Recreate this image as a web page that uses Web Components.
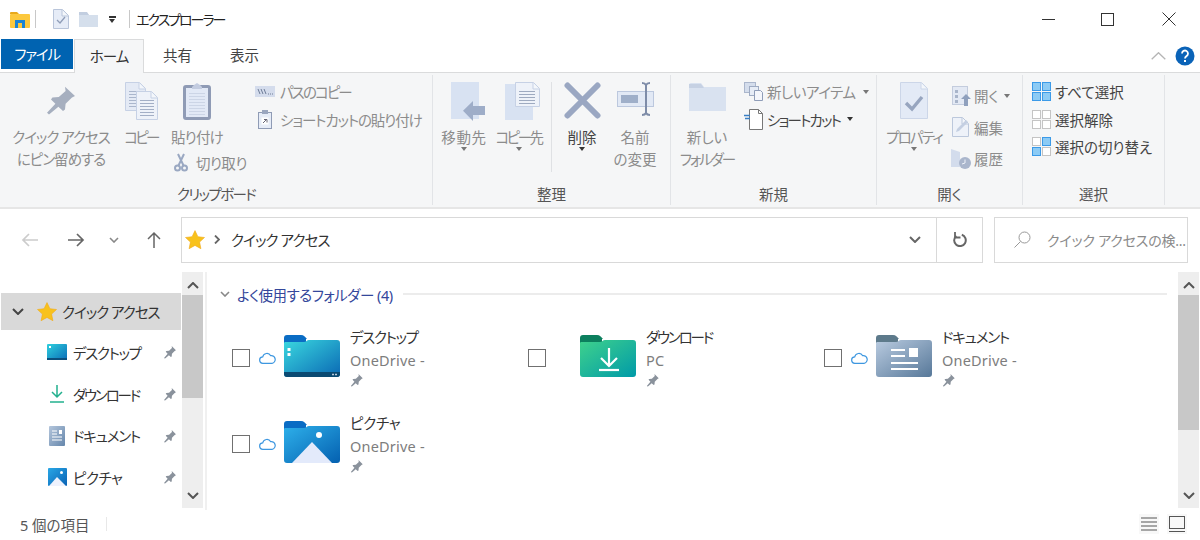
<!DOCTYPE html>
<html lang="ja">
<head>
<meta charset="utf-8">
<title>エクスプローラー</title>
<style>
  html, body { margin: 0; height: 100%; background: #fff; overflow: hidden; }
  body {
    font-family: "Noto Sans", "Noto Sans CJK JP", sans-serif;
    font-size: 14.5px;
    font-feature-settings: "palt";
    color: #333;
  }
  #app { display: flex; flex-direction: column; width: 1200px; height: 540px; }
</style>
</head>
<body>
<div id="app">
  <title-bar></title-bar>
  <ribbon-tabs></ribbon-tabs>
  <ribbon-bar>
    <ribbon-group label="クリップボード" style="width:433px;--pad:10px;--label-ls:-1.6px">
      <ribbon-btn icon="pinBig" style="width:102px;letter-spacing:-1px;--iy:3px">クイック アクセス<br>にピン留めする</ribbon-btn>
      <ribbon-btn icon="copy" style="width:38px;margin-left:10px;letter-spacing:-2.700px">コピー</ribbon-btn>
      <ribbon-stack style="width:87px;margin-left:8px">
        <ribbon-btn icon="paste" style="width:58px;letter-spacing:-.800px">貼り付け</ribbon-btn>
        <ribbon-item icon="cut" style="margin-left:3px;height:28px;letter-spacing:-.600px">切り取り</ribbon-item>
      </ribbon-stack>
      <ribbon-stack>
        <ribbon-item icon="pathCopy" style="letter-spacing:-1.900px">パスのコピー</ribbon-item>
        <ribbon-item icon="linkPaste" style="letter-spacing:-1.100px">ショートカットの貼り付け</ribbon-item>
      </ribbon-stack>
    </ribbon-group>
    <ribbon-group label="整理" style="width:238px;--pad:8px">
      <ribbon-btn icon="moveTo" arrow style="width:46px;letter-spacing:.600px;--ix:8px">移動先</ribbon-btn>
      <ribbon-btn icon="copyTo" arrow style="width:47px;margin-left:8px;letter-spacing:-2.500px;--ix:8px">コピー先</ribbon-btn>
      <ribbon-sep></ribbon-sep>
      <ribbon-btn icon="del" arrow active style="width:60px">削除</ribbon-btn>
      <ribbon-btn icon="rename" style="width:46px">名前<br>の変更</ribbon-btn>
    </ribbon-group>
    <ribbon-group label="新規" style="width:206px">
      <ribbon-btn icon="newFolder" style="width:72px">新しい<br><span style="letter-spacing:-2px">フォルダー</span></ribbon-btn>
      <ribbon-stack style="--gap:4px">
        <ribbon-item icon="newItem" arrow style="letter-spacing:-.500px">新しいアイテム</ribbon-item>
        <ribbon-item icon="shortcut" arrow active style="letter-spacing:-1.800px">ショートカット</ribbon-item>
      </ribbon-stack>
    </ribbon-group>
    <ribbon-group label="開く" style="width:146px">
      <ribbon-btn icon="props" arrow style="width:74px;letter-spacing:-1.800px">プロパティ</ribbon-btn>
      <ribbon-stack style="padding-top:2px;--row:31.500px;--gap:3px">
        <ribbon-item icon="open" arrow>開く</ribbon-item>
        <ribbon-item icon="edit">編集</ribbon-item>
        <ribbon-item icon="history">履歴</ribbon-item>
      </ribbon-stack>
    </ribbon-group>
    <ribbon-group label="選択" style="width:142px;--pad:8px">
      <ribbon-stack style="--gap:4px">
        <ribbon-item icon="selAll" active>すべて選択</ribbon-item>
        <ribbon-item icon="selNone" active>選択解除</ribbon-item>
        <ribbon-item icon="selInv" active>選択の切り替え</ribbon-item>
      </ribbon-stack>
    </ribbon-group>
  </ribbon-bar>
  <nav-bar></nav-bar>
  <main-pane>
    <nav-tree slot="tree">
      <tree-item icon="star" root selected style="letter-spacing:-1px">クイック アクセス</tree-item>
      <tree-item icon="treeDesktop" style="letter-spacing:-1.300px">デスクトップ</tree-item>
      <tree-item icon="treeDownload" style="letter-spacing:-2.200px">ダウンロード</tree-item>
      <tree-item icon="treeDocs" style="letter-spacing:-1.200px">ドキュメント</tree-item>
      <tree-item icon="treePics" style="letter-spacing:-.500px">ピクチャ</tree-item>
    </nav-tree>
    <scroll-bar slot="tree-scroll" top="23" size="103"></scroll-bar>
    <folder-group slot="content" label="よく使用するフォルダー (4)">
      <folder-tile icon="folderDesktop" cloud sub="OneDrive -" style="--name-ls:-1.300px">デスクトップ</folder-tile>
      <folder-tile icon="folderDownload" sub="PC" style="--name-ls:-2.200px">ダウンロード</folder-tile>
      <folder-tile icon="folderDocs" cloud sub="OneDrive -" style="--name-ls:-1.200px">ドキュメント</folder-tile>
      <folder-tile icon="folderPics" cloud sub="OneDrive -" style="--name-ls:-.300px">ピクチャ</folder-tile>
    </folder-group>
    <scroll-bar slot="content-scroll" top="23" size="135"></scroll-bar>
  </main-pane>
  <status-bar>5 個の項目</status-bar>
</div>

<script>
// every icon lives here, x-icon stamps it into its own shadow root
const page = (x, y, w, h, fill = '#e4eaf5', line = '#c6d1e5') =>
  `<path d="M${x + .5} ${y + .5}h${w - 7}l6 6v${h - 7}h-${w - 1}z" fill="${fill}" stroke="${line}"/><path d="M${x + w - 7} ${y + 1}v6h6" fill="#f4f7fb" stroke="${line}"/>`
const lines = (x, y, w, n, gap = 3, c = '#aab6cc') =>
  Array.from({ length: n }, (_, i) => `<path d="M${x} ${y + i * gap + .5}h${w}" stroke="${c}"/>`).join('')
const grid = (a, b, c, d) => {
  const cell = (x, y, on) => `<rect x="${x + .5}" y="${y + .5}" width="8" height="8" fill="${on ? '#8ccbf5' : '#fff'}" stroke="${on ? '#3b9ae8' : '#c4c4c4'}"/>`
  return cell(0, 0, a) + cell(10, 0, b) + cell(0, 10, c) + cell(10, 10, d)
}
const PIN = 'M10 1l5 5-1.500.7-3.200 3.400-.3 3.200-1 .7-2.300-2.300L2 16l-1-1 4.200-4.900L3 7.800l.7-1 3.200-.3 3.400-3.200z'
const STAR = 'M10 .6l2.900 6.100 6.600.8-4.900 4.600 1.300 6.600L10 15.400l-5.900 3.300 1.300-6.600L.5 7.500l6.600-.8z'
const folderShape = (tab, id, extra) => `
  <path d="M0 4a3 3 0 0 1 3-3h14c3 0 4 2 6 4h-23z M0 5h22v5H0z" fill="${tab}"/>
  <path d="M0 9c0-1 1-1 2-1h18c2 0 3-2 5-2h28a3 3 0 0 1 3 3v31a3 3 0 0 1-3 3H3a3 3 0 0 1-3-3z" fill="url(#${id})"/>${extra}`
const grad = (id, a, b) => `<defs><linearGradient id="${id}" x1="0" y1="0" x2="1" y2="1"><stop offset="0" stop-color="${a}"/><stop offset="1" stop-color="${b}"/></linearGradient></defs>`

const ICONS = {
  pinSmall: [16, 16, `<path d="${PIN}" fill="#8a929c"/>`],
  pinBig: [33, 30, `<g transform="scale(2 1.85)"><path d="${PIN}" fill="#a6afbf"/></g>`],
  copy: [33, 38, page(0, 0, 21, 29) + lines(4, 9, 12, 6, 3) + page(11, 9, 22, 29, '#eef2f9') + lines(15, 18, 14, 6, 3, '#a3afc6')],
  paste: [28, 38, `<rect x="1.500" y="4.500" width="25" height="32" rx="1.500" fill="#e2e9f6" stroke="#8f9bb5" stroke-width="3"/><path d="M9 5l2-2 3-2 3 2 2 2v2H9z" fill="#c3cce0"/>` + lines(6, 11, 16, 8, 3, '#ccd5e6')],
  cut: [14, 19, `<g fill="none" stroke="#9aa8c2" stroke-width="2"><circle cx="3.500" cy="15" r="2.500"/><circle cx="10.500" cy="15" r="2.500"/><path d="M4.500 12.500L10 1M9.500 12.500L4 1"/></g>`],
  pathCopy: [20, 11, `<rect width="20" height="11" fill="#d4dcec"/><path d="M3 3l2 5M6 3l2 5M9 3l2 5" stroke="#6f7d98"/><path d="M13 8h5" stroke="#6f7d98" stroke-dasharray="1 1"/>`],
  linkPaste: [14, 19, `<rect x=".5" y="2.500" width="13" height="16" fill="#e6ecf7" stroke="#8f9bb5"/><rect x="4" y="0" width="6" height="4" fill="#9aa6bf"/><rect x="3.500" y="7.500" width="7" height="7" fill="#fff"/><path d="M5 13l3-3M6 9.500h3v3" stroke="#667" fill="none"/>`],
  moveTo: [34, 39, `<path d="M0 0h28v37H0z" fill="#d8e2f2"/><path d="M34 24v9H22v6L12 28.700 22 19v5z" fill="#9eadc8"/>`],
  copyTo: [35, 38, `<path d="M0 2h28v36H0z" fill="#d8e2f2"/>` + page(10, 0, 25, 25, '#eef2f9') + lines(14, 9, 16, 5, 3, '#9eaac0')],
  del: [37, 37, `<path d="M3.500 3.500l30 30M33.500 3.500l-30 30" stroke="#9aa7c2" stroke-width="6" stroke-linecap="round"/>`],
  rename: [37, 34, `<rect x=".5" y="9.500" width="36" height="15" fill="#e2e9f5" stroke="#bcc8de"/><rect x="4" y="13" width="17" height="8" fill="#9fafc9"/><path d="M25 1c1 0 3 0 4 2 1-2 3-2 4-2M29 3v28M25 33c1 0 3 0 4-2 1 2 3 2 4 2" fill="none" stroke="#7e8ca8" stroke-width="2"/>`],
  newFolder: [37, 29, `<path d="M0 3a2 2 0 0 1 2-2h10l3 4h22v24H0z" fill="#d9e2f0"/><path d="M0 2h12l3 4H0z" fill="#c6d1e3"/>`],
  newItem: [19, 19, `<rect x=".5" y=".5" width="11" height="10" fill="#d4ddec" stroke="#aab6cc"/><rect x="5.500" y="4.500" width="9" height="9" fill="#e6ecf6" stroke="#9eabc3"/><path d="M10.500 8.500h6l2 2v8h-8z" fill="#f4f6fb" stroke="#8f9db8"/>`],
  shortcut: [19, 21, `<path d="M5.500 .5h9l4 4v16h-13z" fill="#fff" stroke="#777"/><path d="M14.500 .5v4h4" fill="none" stroke="#777"/><path d="M0 6.500h6M1 9.500h5" stroke="#3a7fc4" stroke-width="1.400"/>`],
  props: [28, 37, page(0, 0, 28, 37, '#e3eaf6', '#ccd6e8') + `<path d="M6 21l6 6 10-12" fill="none" stroke="#97a5bf" stroke-width="3.400"/>`],
  open: [19, 20, `<rect x=".5" y=".5" width="15" height="18" fill="#e3e9f4" stroke="#c3ccdd"/><path d="M3 4h3v3H3zM3 9h3v3H3zM3 14h3v3H3z" fill="#a9b5ca"/><path d="M14 8l5 5h-3v7h-4v-7H9z" fill="#8fa0bd"/>`],
  edit: [19, 20, page(0, 0, 17, 20, '#eef2f9', '#bcc8dc') + `<path d="M4 15l1-3 9-9 2 2-9 9z" fill="#c4cfe2"/>`],
  history: [20, 20, `<path d="M0 0l9 3v15l-9 0z" fill="#d3dcec"/><circle cx="14" cy="14" r="6" fill="#aab6cc"/><path d="M14 10.500V14l-3 1" stroke="#eef2f9" fill="none"/>`],
  selAll: [19, 19, grid(1, 1, 1, 1)],
  selNone: [19, 19, grid(0, 0, 0, 0)],
  selInv: [19, 19, grid(0, 1, 1, 0)],
  star: [20, 19, `<path d="${STAR}" fill="#f8c21c" stroke="#f2a91a" stroke-width=".6"/>`],
  cloud: [17, 12, `<path d="M4 11.300a3.200 3.200 0 0 1-.3-6.400 4.300 4.300 0 0 1 8-1.200 3.800 3.800 0 0 1 1.300 7.600z" fill="none" stroke="#3d97e0" stroke-width="1.200"/>`],
  treeDesktop: [20, 16, grad('a', '#2fd0de', '#0a6db8') + `<rect width="20" height="16" rx="1" fill="url(#a)"/><rect y="14" width="20" height="2" fill="#0b4f7d"/><rect x="2" y="2" width="2" height="2" fill="#fff"/>`],
  treeDownload: [14, 18, `<path d="M7 0v12M2 7l5 5 5-5" fill="none" stroke="#22b08e" stroke-width="1.500"/><path d="M0 17h14" stroke="#22b08e" stroke-width="1.500"/>`],
  treeDocs: [16, 20, grad('a', '#b4c6dc', '#6586ab') + `<rect width="16" height="20" rx="1" fill="url(#a)"/><path d="M3 5h5M3 8h5M3 11h10M3 14h10" stroke="#fff"/><rect x="10" y="4" width="3" height="4" fill="#fff"/>`],
  treePics: [19, 18, grad('a', '#29a7e6', '#0a62b4') + `<rect width="19" height="18" rx="1" fill="url(#a)"/><path d="M1 18l8-9 9 9z" fill="#eef2fd"/><circle cx="13.500" cy="4.500" r="1.500" fill="#fff"/>`],
  folderDesktop: [56, 44, grad('a', '#3ad8df', '#0a68b4') + folderShape('#0a6cc4', 'a', `<path d="M0 38h56v2a3 3 0 0 1-3 3H3a3 3 0 0 1-3-3z" fill="#0b4a72"/><rect x="3.500" y="14" width="3" height="3" fill="#fff"/><rect x="3.500" y="19" width="3" height="3" fill="#fff"/><path d="M48 40.500h2M51 40.500h2" stroke="#bcd" stroke-width="1.500"/>`)],
  folderDownload: [56, 44, grad('a', '#3fd28c', '#009aa8') + folderShape('#0c7f5e', 'a', `<path d="M29 14v18M21 24l8 8 8-8" fill="none" stroke="#fff" stroke-width="2.200"/><path d="M19 36h20" stroke="#fff" stroke-width="2.200"/>`)],
  folderDocs: [56, 44, grad('a', '#b9cbe0', '#577899') + folderShape('#5d7a8b', 'a', `<path d="M15 16h14M15 22h14M15 29h27M15 35h27" stroke="#fff" stroke-width="2"/><rect x="33" y="14" width="9" height="9" fill="#fff"/>`)],
  folderPics: [56, 44, grad('a', '#2eb0ea', '#0460b0') + folderShape('#0a6cc4', 'a', `<circle cx="35" cy="15" r="3" fill="#fff"/><path d="M8 43l20-21 20 21z" fill="#e3eafb"/>`)],
  iconApp: [20, 17, `<path d="M0 2a1 1 0 0 1 1-1h6l2 2H0z" fill="#e8a91c"/><rect y="3" width="20" height="14" rx="1" fill="#fcc83d"/><rect x="5" y="9" width="10" height="8" fill="#1a84d4"/><rect x="8" y="12" width="4" height="5" fill="#fcc83d"/>`],
  qaCheck: [16, 20, page(0, 0, 16, 20, '#e6ecf7', '#b9c5da') + `<path d="M4 11l3 3 5-6" fill="none" stroke="#8f9db8" stroke-width="1.300"/>`],
  qaFolder: [19, 15, `<path d="M0 1h8l2 2h9v12H0z" fill="#d5dfec"/><path d="M0 0h8l2 3H0z" fill="#c2cee0"/>`],
  back: [17, 14, `<path d="M17 7H2M8 1L2 7l6 6" fill="none" stroke="currentColor" stroke-width="1.700"/>`],
  forward: [17, 14, `<path d="M0 7h15M9 1l6 6-6 6" fill="none" stroke="currentColor" stroke-width="1.700"/>`],
  up: [14, 17, `<path d="M7 17V2M1 8l6-6 6 6" fill="none" stroke="currentColor" stroke-width="1.500"/>`],
  down: [10, 6, `<path d="M1 1l4 4 4-4" fill="none" stroke="currentColor" stroke-width="1.600"/>`],
  downBold: [12, 7, `<path d="M1 1l5 5 5-5" fill="none" stroke="currentColor" stroke-width="2"/>`],
  upBold: [12, 7, `<path d="M1 6l5-5 5 5" fill="none" stroke="currentColor" stroke-width="2"/>`],
  right: [6, 9, `<path d="M1 .5l4 4-4 4" fill="none" stroke="currentColor" stroke-width="1.800"/>`],
  refresh: [14, 15, `<path d="M8.800 2.800a5.800 5.800 0 1 1-5.500 1" fill="none" stroke="currentColor" stroke-width="2"/><path d="M2 0v5.500h5.500" fill="none" stroke="currentColor" stroke-width="1.800"/>`],
  search: [17, 17, `<circle cx="10.500" cy="6.500" r="5.500" fill="none" stroke="currentColor"/><path d="M6.500 10.500L.5 16.500" stroke="currentColor"/>`],
  minimize: [13, 1, `<path d="M0 .5h13" stroke="currentColor"/>`],
  maximize: [13, 13, `<rect x=".5" y=".5" width="12" height="12" fill="none" stroke="currentColor"/>`],
  close: [14, 14, `<path d="M.5.500l13 13M13.500.500l-13 13" stroke="currentColor"/>`],
  chevUp: [15, 8, `<path d="M.7 7.300L7.500 .7l6.800 6.600" fill="none" stroke="#b5b5b5" stroke-width="1.300"/>`],
  help: [20, 20, `<circle cx="10" cy="10" r="9.500" fill="#0a63b8"/><path d="M7 7.500a3 3 0 1 1 4.500 2.600c-1 .6-1.500 1-1.500 2.400" fill="none" stroke="#fff" stroke-width="1.800"/><rect x="9" y="14" width="2" height="2" fill="#fff"/>`],
  detail: [16, 14, `<path d="M0 1h16M0 5h16M0 9h16M0 13h16" stroke="#555" stroke-width="1.200"/>`],
  tiles: [16, 16, `<rect x=".5" y=".5" width="15" height="12" fill="none" stroke="#555"/><path d="M0 15.500h16" stroke="#555"/>`]
}

customElements.define('x-icon', class extends HTMLElement {
  constructor () {
    super()
    this.attachShadow({ mode: 'open' })
  }

  connectedCallback () {
    const [w, h, body] = ICONS[this.getAttribute('name')]
    this.shadowRoot.innerHTML = `
      <style>:host{display:inline-flex;flex:none;line-height:0}</style>
      <svg width="${w}" height="${h}" viewBox="0 0 ${w} ${h}" xmlns="http://www.w3.org/2000/svg">${body}</svg>`
  }
})

// small helper so the classes below stay short
const define = (tag, markup) => customElements.define(tag, class extends HTMLElement {
  constructor () {
    super()
    this.attachShadow({ mode: 'open' })
    this.shadowRoot.innerHTML = typeof markup === 'function' ? markup(this) : markup
  }
})

define('title-bar', `
<style>
  :host{display:flex;align-items:center;height:38px;flex:none;position:relative;font-size:14px;color:#222}
  .sep{width:1px;height:18px;background:#c8c8c8}
  .win{margin-left:auto;display:flex;color:#333;padding-right:24px;align-items:center}
  .drop{width:0;height:0;border:3.500px solid transparent;border-top:4px solid #333;border-bottom:0;margin-top:3px;position:relative}
  .drop::before{content:"";position:absolute;left:-3.500px;top:-6.500px;width:7px;height:1.500px;background:#333}
</style>
<x-icon name="iconApp" style="margin-left:10px"></x-icon>
<div class="sep" style="margin-left:5px"></div>
<x-icon name="qaCheck" style="margin-left:17px"></x-icon>
<x-icon name="qaFolder" style="margin-left:10px"></x-icon>
<div class="drop" style="margin-left:11px"></div>
<div class="sep" style="margin-left:14px"></div>
<span style="margin-left:6px;letter-spacing:-2px">エクスプローラー</span>
<div class="win">
  <x-icon name="minimize"></x-icon>
  <x-icon name="maximize" style="margin-left:46px"></x-icon>
  <x-icon name="close" style="margin-left:48px"></x-icon>
</div>`)

define('ribbon-tabs', `
<style>
  :host{display:flex;height:35px;flex:none;box-sizing:border-box;border-bottom:1px solid #dadbdc;padding-left:1px;align-items:flex-start;padding-top:1px}
  div{height:32px;line-height:33px;text-align:center;box-sizing:border-box}
  .file{width:72px;height:30px;line-height:31px;background:#0063b1;color:#fff;letter-spacing:-1.200px}
  .home{width:70px;height:34px;margin-left:1px;background:#f5f6f7;border:1px solid #dadbdc;border-bottom:0;color:#333;letter-spacing:-1px}
  .tab{width:67px;color:#444}
  .help{margin-left:auto;display:flex;gap:9px;align-items:center;padding:7px 5px 0 0;height:auto}
</style>
<div class="file">ファイル</div>
<div class="home">ホーム</div>
<div class="tab">共有</div>
<div class="tab">表示</div>
<div class="help"><x-icon name="chevUp"></x-icon><x-icon name="help"></x-icon></div>`)

define('ribbon-bar', `
<style>
  :host{display:flex;height:136px;flex:none;box-sizing:border-box;background:#f5f6f7;border-bottom:2px solid #e6e6e6;padding:2px 0 2px}
</style>
<slot></slot>`)

define('ribbon-group', el => `
<style>
  :host{display:flex;flex-direction:column;flex:none;box-sizing:border-box;border-right:1px solid #e2e4e7}
  .body{display:flex;flex:1;padding:3px 0 0 var(--pad,0);min-height:0}
  .label{height:22px;line-height:22px;text-align:center;color:#555;letter-spacing:var(--label-ls,0)}
</style>
<div class="body"><slot></slot></div>
<div class="label">${el.getAttribute('label')}</div>`)

define('ribbon-btn', el => `
<style>
  :host{display:flex;flex-direction:column;align-items:center;flex:none;padding-top:4px;color:${el.hasAttribute('active') ? '#444' : '#8c8c8c'};white-space:nowrap;text-align:center;line-height:22px}
  .icon{height:44px;display:flex;align-items:flex-start;box-sizing:border-box;padding:var(--iy,0) 0 0 var(--ix,0)}
  .arrow{width:0;height:0;border:3.500px solid transparent;border-top:4px solid ${el.hasAttribute('active') ? '#333' : '#777'};border-bottom:0;margin-top:-1px}
</style>
<div class="icon"><x-icon name="${el.getAttribute('icon')}"></x-icon></div>
<div><slot></slot></div>
${el.hasAttribute('arrow') ? '<div class="arrow"></div>' : ''}`)

define('ribbon-stack', `
<style>:host{display:flex;flex-direction:column;flex:none}</style>
<slot></slot>`)

define('ribbon-item', el => `
<style>
  :host{display:flex;align-items:center;height:var(--row,27.500px);gap:var(--gap,5px);white-space:nowrap;color:${el.hasAttribute('active') ? '#444' : '#8c8c8c'}}
  .box{width:20px;display:flex;justify-content:center}
  .arrow{width:0;height:0;border:3.500px solid transparent;border-top:4px solid ${el.hasAttribute('active') ? '#333' : '#777'};border-bottom:0;margin-left:3px}
</style>
<div class="box"><x-icon name="${el.getAttribute('icon')}"></x-icon></div>
<slot></slot>
${el.hasAttribute('arrow') ? '<div class="arrow"></div>' : ''}`)

define('ribbon-sep', `
<style>:host{display:block;flex:none;width:1px;height:90px;margin:4px 0 0 9px;background:#dfe1e4}</style>`)

define('nav-bar', `
<style>
  :host{display:flex;align-items:center;height:63px;flex:none;box-sizing:border-box;padding:0 12px 2px 0}
  .btn{display:flex;flex:none;color:#666}
  .addr,.search{display:flex;align-items:center;height:46px;box-sizing:border-box;border:1px solid #d9d9d9;color:#333}
  .addr{width:802px;margin-left:20px}
  .search{width:194px;margin-left:11px;color:#8a8a8a;font-size:14px}
  .path{flex:1;margin-left:11px;letter-spacing:-.900px}
  .end{display:flex;align-items:center;justify-content:center;width:45px;height:100%;border-left:1px solid #d9d9d9;color:#666}
</style>
<x-icon class="btn" name="back" style="margin-left:21px;color:#ccc"></x-icon>
<x-icon class="btn" name="forward" style="margin-left:30px"></x-icon>
<x-icon class="btn" name="down" style="margin-left:24px;color:#888"></x-icon>
<x-icon class="btn" name="up" style="margin-left:28px"></x-icon>
<div class="addr">
  <x-icon name="star" style="margin-left:3px"></x-icon>
  <x-icon name="right" style="margin-left:9px;color:#666"></x-icon>
  <span class="path">クイック アクセス</span>
  <x-icon name="downBold" style="color:#666;margin-right:15px"></x-icon>
  <div class="end"><x-icon name="refresh"></x-icon></div>
</div>
<div class="search">
  <x-icon name="search" style="margin-left:19px;color:#999"></x-icon>
  <span style="margin-left:16px;white-space:nowrap;letter-spacing:-.200px">クイック アクセスの検...</span>
</div>`)

define('main-pane', `
<style>
  :host{display:flex;flex:1;min-height:0}
  .tree{width:181px;flex:none;padding-top:21px;box-sizing:border-box}
  .div{width:2px;flex:none;margin-left:2px;background:#f0f0f0}
  .content{flex:1;min-width:0}
  .right{padding-right:1px}
  ::slotted(scroll-bar){margin-left:1px}
</style>
<div class="tree"><slot name="tree"></slot></div>
<slot name="tree-scroll"></slot>
<div class="div"></div>
<div class="content"><slot name="content"></slot></div>
<div class="right"><slot name="content-scroll"></slot></div>`)

define('nav-tree', `
<style>:host{display:block}</style>
<slot></slot>`)

define('tree-item', el => {
  const root = el.hasAttribute('root')
  return `
<style>
  :host{display:flex;align-items:center;box-sizing:border-box;margin-left:1px;height:${root ? 37 : 41.7}px;color:#333;white-space:nowrap;${el.hasAttribute('selected') ? 'background:#d9d9d9;margin-bottom:1.500px;' : ''}}
  .ic{display:flex;justify-content:center;align-items:center;flex:none;width:24px;margin-left:${root ? 3 : 44}px;margin-right:${root ? 1 : 2}px}
  .t{flex:1;margin-left:2px}
  .ch{display:flex;flex:none;margin-left:11px;width:20px;color:#444}
</style>
${root ? '<x-icon class="ch" name="downBold"></x-icon>' : ''}
<div class="ic"><x-icon name="${el.getAttribute('icon')}"></x-icon></div>
<div class="t"><slot></slot></div>
${root ? '' : '<x-icon name="pinSmall" style="margin-right:3px;transform:scale(.85)"></x-icon>'}`
})

define('scroll-bar', el => `
<style>
  :host{display:flex;flex-direction:column;flex:none;width:21px;height:236px;background:#eee;position:relative;color:#555;align-items:center}
  .a{position:absolute;display:flex}
  .thumb{position:absolute;left:0;right:0;top:${el.getAttribute('top')}px;height:${el.getAttribute('size')}px;background:#c8c8c8}
</style>
<x-icon class="a" name="upBold" style="top:10px"></x-icon>
<div class="thumb"></div>
<x-icon class="a" name="downBold" style="bottom:9px"></x-icon>`)

define('folder-group', el => `
<style>
  :host{display:block;padding:11px 10px 0 10px}
  .head{display:flex;align-items:center;height:22px;color:#34479b;letter-spacing:-.500px}
  .rule{flex:1;height:2px;background:#ececec;margin-left:10px}
  .head span{margin-left:-1px}
  .grid{display:grid;grid-template-columns:repeat(3,296px);grid-auto-rows:86px;margin:21px 0 0 15px}
</style>
<div class="head">
  <x-icon name="down" style="margin-left:3px;color:#888;margin-right:8px"></x-icon>
  <span>${el.getAttribute('label')}</span>
  <div class="rule"></div>
</div>
<div class="grid"><slot></slot></div>`)

define('folder-tile', el => `
<style>
  :host{display:flex;align-items:flex-start;height:86px}
  .check{width:18px;height:18px;box-sizing:border-box;border:1px solid #707070;margin-top:23px;flex:none}
  .cloud{width:18px;flex:none;margin:26px 0 0 9px;display:flex}
  .folder{margin:8px 0 0 7px;display:flex;flex:none}
  .text{margin-left:10px;display:flex;flex-direction:column;white-space:nowrap;color:#333;line-height:22px}
  .name{letter-spacing:var(--name-ls,0)}
  .sub{color:#7d7d7d;margin-top:1px;letter-spacing:.2px}
  .pin{display:flex;margin-top:1px}
</style>
<div class="check"></div>
<div class="cloud">${el.hasAttribute('cloud') ? '<x-icon name="cloud"></x-icon>' : ''}</div>
<x-icon class="folder" name="${el.getAttribute('icon')}"></x-icon>
<div class="text">
  <div class="name"><slot></slot></div>
  <div class="sub">${el.getAttribute('sub')}</div>
  <x-icon class="pin" name="pinSmall" style="transform:scale(.85);transform-origin:left center"></x-icon>
</div>`)

define('status-bar', `
<style>
  :host{display:flex;align-items:center;height:30px;flex:none;box-sizing:border-box;color:#555;padding:0 0 2px 20px;font-size:14.500px}
  .sep{width:1px;height:14px;background:#e8e8e8;margin-left:16px}
  .views{margin-left:auto;display:flex;align-items:center;padding-right:13px}
  .v{width:20px;height:20px;display:flex;align-items:center;justify-content:center;background:#f8f8f8}
</style>
<slot></slot>
<div class="sep"></div>
<div class="views">
  <div class="v"><x-icon name="detail"></x-icon></div>
  <div class="v" style="margin-left:8px"><x-icon name="tiles"></x-icon></div>
</div>`)
</script>
</body>
</html>
